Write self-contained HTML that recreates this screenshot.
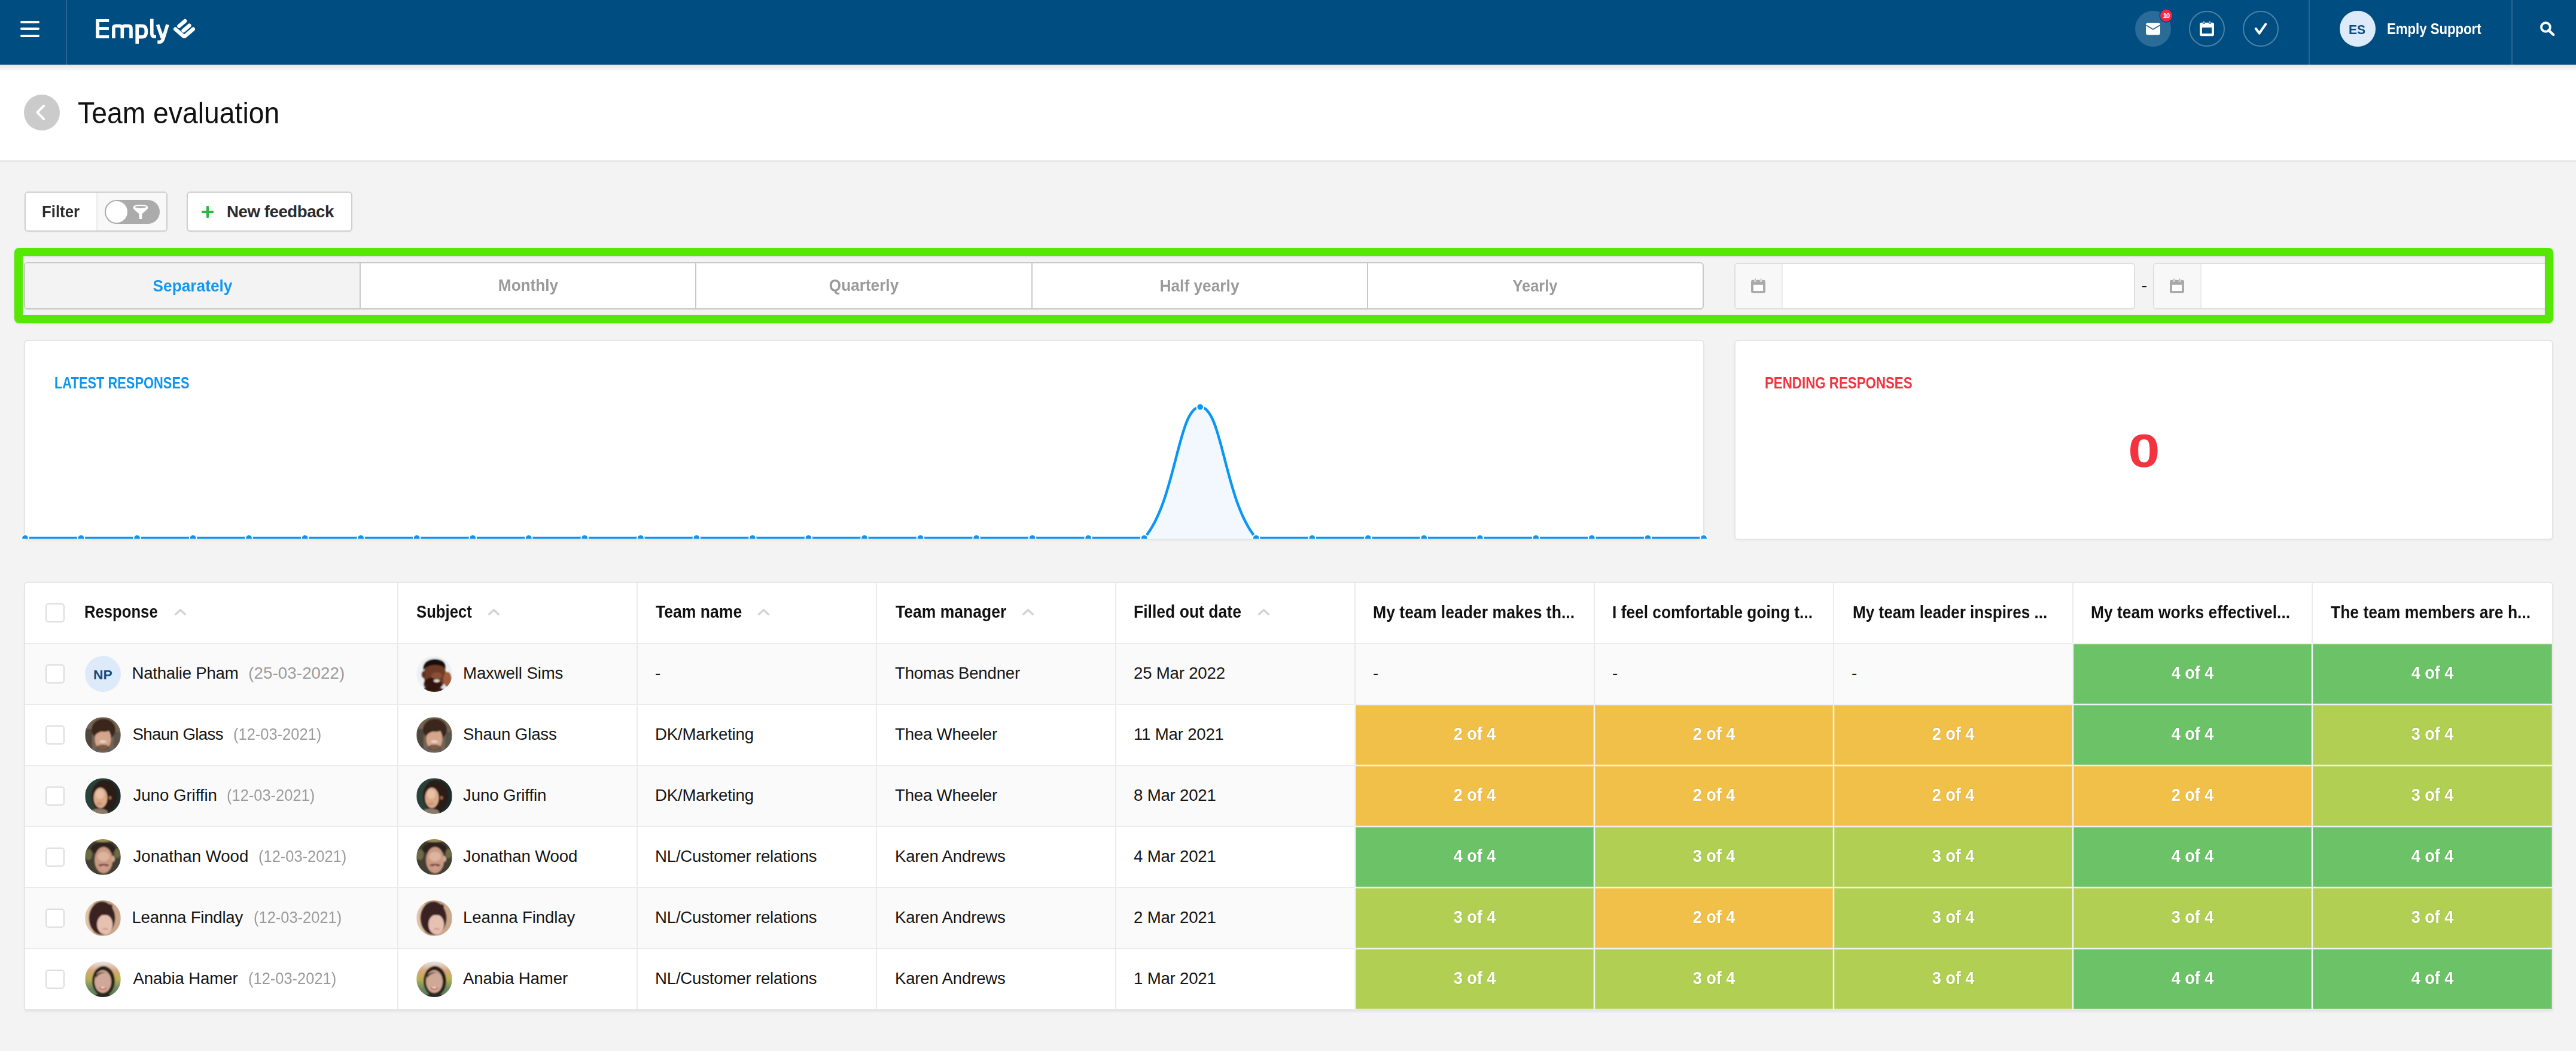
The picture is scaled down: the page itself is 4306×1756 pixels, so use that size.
<!DOCTYPE html>
<html><head><meta charset="utf-8"><title>Team evaluation</title>
<style>
html,body{margin:0;padding:0;}
body{width:4306px;height:1756px;overflow:hidden;position:relative;background:#f3f3f3;font-family:"Liberation Sans", sans-serif;}
.t{position:absolute;white-space:nowrap;font-family:"Liberation Sans", sans-serif;}
.b{position:absolute;}
svg.b{overflow:hidden;}
</style></head><body>
<div class="b" style="left:0px;top:0px;width:4306px;height:108px;background:#004d82;"></div><div class="b" style="left:0px;top:108px;width:4306px;height:14px;background:linear-gradient(rgba(0,0,0,0.09),rgba(0,0,0,0));"></div><div class="b" style="left:34px;top:34.5px;width:32px;height:4px;background:#fff;border-radius:2px;"></div><div class="b" style="left:34px;top:46px;width:32px;height:4px;background:#fff;border-radius:2px;"></div><div class="b" style="left:34px;top:57.5px;width:32px;height:4px;background:#fff;border-radius:2px;"></div><div class="b" style="left:110px;top:0px;width:2px;height:108px;background:#2f6594;"></div><div class="b" style="left:3859px;top:0px;width:2px;height:108px;background:#2f6594;"></div><div class="b" style="left:4198px;top:0px;width:2px;height:108px;background:#2f6594;"></div><svg class="b" style="left:0;top:0" width="340" height="108" viewBox="0 0 340 108">
<g fill="#fff">
<path d="M160.3,32H182.2V37.1H166.1V45H181.9V50.1H166.1V58.9H182.2V64H160.3Z"/>
</g>
<g fill="none" stroke="#fff" stroke-width="5.6" stroke-linejoin="miter">
<path d="M189.9,64V47Q189.9,43.3 193.5,43.3H199.5Q204.3,43.3 204.3,48V64M204.3,48Q204.3,43.3 209,43.3H214.5Q219,43.3 219,48V64"/>
<path d="M229.2,72.9V43.3H237.5Q244.4,43.3 244.4,52.8Q244.4,61.8 237.5,61.8H229.2"/>
<path d="M253.8,31.5V56Q253.8,61.2 258.5,61.2H261"/>
<path d="M263.5,41.2L271.3,63.5M280.1,41.2L272.5,65.5Q270.8,70.2 266.5,70.2H263.3"/>
</g>
<g fill="none" stroke="#fff" stroke-width="6.4" stroke-linecap="round" stroke-linejoin="round">
<path d="M293.2,48.7L306.3,60.1Q307.9,61.4 309.5,60.1L322.8,48.7"/>
<path d="M299.4,43.7L309.3,35.1"/>
<path d="M306.5,51.2L316.4,42.7"/>
</g>
</svg><div class="b" style="left:3569px;top:18px;width:60px;height:60px;background:rgba(255,255,255,0.17);border-radius:50%;"></div><svg class="b" style="left:3580px;top:30px" width="40" height="36" viewBox="3580 30 40 36">
<rect x="3587" y="38" width="24" height="20.2" rx="3.5" fill="#fff"/>
<path d="M3587.5,42.2L3599,49L3610.5,42.2" fill="none" stroke="#2a628f" stroke-width="1.8"/>
</svg><div class="b" style="left:3611px;top:15.8px;width:20px;height:20px;background:#ee2c3c;border-radius:50%;box-shadow:0 0 0 1.6px #004d82;"></div><div class="t" style="left:3615.8px;top:21.2px;font-size:11.00px;line-height:11.00px;font-weight:700;color:#fff;letter-spacing:-0.900px;">10</div><div class="b" style="left:3659px;top:18px;width:60px;height:60px;border:2px solid rgba(255,255,255,0.3);border-radius:50%;box-sizing:border-box;"></div><svg class="b" style="left:3670px;top:30px" width="40" height="36" viewBox="3670 30 40 36">
<rect x="3677" y="37.8" width="24" height="22.4" rx="3" fill="#fff"/>
<rect x="3681" y="46" width="16" height="10" fill="#004d82"/>
<path d="M3684,35.5V40M3694,35.5V40" stroke="#004d82" stroke-width="3.4"/>
<path d="M3684,35.6V39.5M3694,35.6V39.5" stroke="#fff" stroke-width="1.4"/>
</svg><div class="b" style="left:3749px;top:18px;width:60px;height:60px;border:2px solid rgba(255,255,255,0.3);border-radius:50%;box-sizing:border-box;"></div><svg class="b" style="left:3760px;top:30px" width="40" height="36" viewBox="3760 30 40 36">
<path d="M3770.8,47.8L3776.6,55.6L3787.3,40.3" fill="none" stroke="#fff" stroke-width="4" stroke-linecap="round" stroke-linejoin="round"/>
</svg><div class="b" style="left:3911px;top:18px;width:60px;height:60px;background:#dceafa;border-radius:50%;"></div><div class="t" style="left:3926.1px;top:38.2px;font-size:22.82px;line-height:22.82px;font-weight:700;color:#0f4a7c;transform:scaleX(0.9243);transform-origin:0 0;">ES</div><div class="t" style="left:3990.2px;top:35.2px;font-size:26.16px;line-height:26.16px;font-weight:700;color:#fff;transform:scaleX(0.8473);transform-origin:0 0;">Emply Support</div><svg class="b" style="left:4240px;top:30px" width="40" height="36" viewBox="4240 30 40 36">
<circle cx="4255.4" cy="45.4" r="7.4" fill="none" stroke="#fff" stroke-width="3.9"/>
<path d="M4260.3,50.6L4268.2,58" stroke="#fff" stroke-width="4.4" stroke-linecap="round"/>
</svg><div class="b" style="left:0px;top:108px;width:4306px;height:160px;background:#fff;"></div><div class="b" style="left:0px;top:108px;width:4306px;height:12px;background:linear-gradient(rgba(0,0,0,0.1),rgba(0,0,0,0));"></div><div class="b" style="left:0px;top:268px;width:4306px;height:2px;background:#e2e2e2;"></div><div class="b" style="left:40px;top:158px;width:60px;height:60px;background:#cbcbcb;border-radius:50%;"></div><svg class="b" style="left:40px;top:158px" width="60" height="60" viewBox="40 158 60 60">
<path d="M73.2,176.8L62.3,187.7L73.2,198.8" fill="none" stroke="#fff" stroke-width="4" stroke-linecap="round" stroke-linejoin="round"/>
</svg><div class="t" style="left:130.1px;top:163.7px;font-size:49.42px;line-height:49.42px;font-weight:400;color:#111;transform:scaleX(0.9374);transform-origin:0 0;">Team evaluation</div><div class="b" style="left:41px;top:320px;width:239px;height:67px;background:#fff;border:2px solid #cfcfcf;border-radius:6px;box-sizing:border-box;box-shadow:0 1px 2px rgba(0,0,0,0.06);"></div><div class="b" style="left:161px;top:322px;width:117px;height:63px;background:#f8f8f8;border-left:2px solid #ebebeb;border-radius:0 4px 4px 0;box-sizing:border-box;"></div><div class="t" style="left:69.7px;top:339.9px;font-size:27.62px;line-height:27.62px;font-weight:700;color:#2b2b2b;transform:scaleX(0.9347);transform-origin:0 0;">Filter</div><div class="b" style="left:175px;top:334px;width:92px;height:40px;background:#ababab;border-radius:20px;"></div><div class="b" style="left:176.6px;top:335.6px;width:36.6px;height:36.6px;background:#fff;border-radius:50%;"></div><svg class="b" style="left:215px;top:334px" width="40" height="40" viewBox="215 334 40 40">
<path d="M223,345.5Q223,342 235,342Q247,342 247,345.5V348.8L237.3,357.5V365Q237.3,366 236.3,366H233.6Q232.6,366 232.6,365V357.5L223,348.8Z" fill="#fff"/>
<ellipse cx="235.1" cy="345.8" rx="9.4" ry="1.8" fill="#ababab"/>
</svg><div class="b" style="left:312px;top:320px;width:277px;height:67px;background:#fff;border:2px solid #cfcfcf;border-radius:6px;box-sizing:border-box;box-shadow:0 1px 2px rgba(0,0,0,0.06);"></div><div class="b" style="left:337px;top:352px;width:20px;height:4px;background:#2cb743;border-radius:1px;"></div><div class="b" style="left:345px;top:344px;width:4px;height:20px;background:#2cb743;border-radius:1px;"></div><div class="t" style="left:379.0px;top:339.9px;font-size:27.62px;line-height:27.62px;font-weight:700;color:#2b2b2b;letter-spacing:-0.435px;">New feedback</div><div class="b" style="left:40px;top:438px;width:2808px;height:79px;background:#fff;border:2px solid #c9c9c9;border-radius:6px;box-sizing:border-box;box-shadow:0 1px 2px rgba(0,0,0,0.05);"></div><div class="b" style="left:42px;top:440px;width:559px;height:75px;background:#f3f3f3;border-radius:4px 0 0 4px;"></div><div class="b" style="left:601px;top:440px;width:2px;height:75px;background:#c9c9c9;"></div><div class="b" style="left:1162px;top:440px;width:2px;height:75px;background:#c9c9c9;"></div><div class="b" style="left:1724px;top:440px;width:2px;height:75px;background:#c9c9c9;"></div><div class="b" style="left:2285px;top:440px;width:2px;height:75px;background:#c9c9c9;"></div><div class="t" style="left:-78.5px;width:800px;text-align:center;top:462.8px;font-size:28.34px;line-height:28.34px;font-weight:700;color:#1497ef;transform:scaleX(0.9265);transform-origin:50% 0;">Separately</div><div class="t" style="left:482.5px;width:800px;text-align:center;top:463.4px;font-size:27.62px;line-height:27.62px;font-weight:700;color:#9a9a9a;transform:scaleX(0.9482);transform-origin:50% 0;">Monthly</div><div class="t" style="left:1043.5px;width:800px;text-align:center;top:463.4px;font-size:27.62px;line-height:27.62px;font-weight:700;color:#9a9a9a;transform:scaleX(0.9482);transform-origin:50% 0;">Quarterly</div><div class="t" style="left:1604.5px;width:800px;text-align:center;top:462.8px;font-size:28.34px;line-height:28.34px;font-weight:700;color:#9a9a9a;transform:scaleX(0.9288);transform-origin:50% 0;">Half yearly</div><div class="t" style="left:2166.0px;width:800px;text-align:center;top:462.8px;font-size:28.34px;line-height:28.34px;font-weight:700;color:#9a9a9a;transform:scaleX(0.8968);transform-origin:50% 0;">Yearly</div><div class="b" style="left:2899px;top:439px;width:670px;height:78px;background:#fff;border:2px solid #dfdfdf;border-radius:6px;box-sizing:border-box;"></div><div class="b" style="left:2901px;top:441px;width:77px;height:74px;background:#f8f8f8;border-right:2px solid #ebebeb;border-radius:4px 0 0 4px;"></div><svg class="b" style="left:2923px;top:460px" width="32" height="36" viewBox="2923 460 32 36">
<rect x="2927" y="467.8" width="24" height="22" rx="3.2" fill="#a9a9a9"/>
<rect x="2931" y="475.8" width="16" height="10.2" fill="#fff"/>
<path d="M2934,465V470.5M2943.6,465V470.5" stroke="#f8f8f8" stroke-width="3.6"/>
<path d="M2934,465.6V469.6M2943.6,465.6V469.6" stroke="#a9a9a9" stroke-width="1.5"/>
</svg><div class="b" style="left:3599px;top:439px;width:667px;height:78px;background:#fff;border:2px solid #dfdfdf;border-radius:6px;box-sizing:border-box;"></div><div class="b" style="left:3601px;top:441px;width:77px;height:74px;background:#f8f8f8;border-right:2px solid #ebebeb;border-radius:4px 0 0 4px;"></div><svg class="b" style="left:3623px;top:460px" width="32" height="36" viewBox="3623 460 32 36">
<rect x="3627" y="467.8" width="24" height="22" rx="3.2" fill="#a9a9a9"/>
<rect x="3631" y="475.8" width="16" height="10.2" fill="#fff"/>
<path d="M3634,465V470.5M3643.6,465V470.5" stroke="#f8f8f8" stroke-width="3.6"/>
<path d="M3634,465.6V469.6M3643.6,465.6V469.6" stroke="#a9a9a9" stroke-width="1.5"/>
</svg><div class="b" style="left:3581px;top:477.8px;width:7px;height:2.5px;background:#111;"></div><div class="b" style="left:24px;top:414px;width:4244px;height:126px;border:14px solid #54e802;border-radius:8px;box-sizing:border-box;box-shadow:0 1px 3px rgba(0,0,0,0.15), inset 0 1px 3px rgba(0,0,0,0.12);"></div><div class="b" style="left:42px;top:570px;width:2805px;height:330px;background:#fff;border-radius:4px;box-shadow:0 0 0 2px #e5e5e5, 0 2px 5px rgba(0,0,0,0.08);"></div><div class="b" style="left:2901px;top:570px;width:1365px;height:330px;background:#fff;border-radius:4px;box-shadow:0 0 0 2px #e5e5e5, 0 2px 5px rgba(0,0,0,0.08);"></div><div class="t" style="left:91.2px;top:626.8px;font-size:26.89px;line-height:26.89px;font-weight:700;color:#0f95ef;transform:scaleX(0.8136);transform-origin:0 0;">LATEST RESPONSES</div><div class="t" style="left:2950.2px;top:626.8px;font-size:26.89px;line-height:26.89px;font-weight:700;color:#f3333f;transform:scaleX(0.8298);transform-origin:0 0;">PENDING RESPONSES</div><div class="t" style="left:3183.5px;width:800px;text-align:center;top:714.2px;font-size:78.60px;line-height:78.60px;font-weight:700;color:#f3333f;transform:scaleX(1.2200);transform-origin:50% 0;">0</div><svg class="b" style="left:20px;top:640px" width="2850" height="260" viewBox="20 640 2850 260">
<path d="M42.0,899.0 C79.4,899.0 98.1,899.0 135.5,899.0 C172.9,899.0 191.7,899.0 229.1,899.0 C266.5,899.0 285.2,899.0 322.6,899.0 C360.0,899.0 378.7,899.0 416.1,899.0 C453.5,899.0 472.3,899.0 509.7,899.0 C547.1,899.0 565.8,899.0 603.2,899.0 C640.6,899.0 659.3,899.0 696.7,899.0 C734.1,899.0 752.9,899.0 790.3,899.0 C827.7,899.0 846.4,899.0 883.8,899.0 C921.2,899.0 939.9,899.0 977.3,899.0 C1014.7,899.0 1033.5,899.0 1070.9,899.0 C1108.3,899.0 1127.0,899.0 1164.4,899.0 C1201.8,899.0 1220.5,899.0 1257.9,899.0 C1295.3,899.0 1314.1,899.0 1351.5,899.0 C1388.9,899.0 1407.6,899.0 1445.0,899.0 C1482.4,899.0 1501.1,899.0 1538.5,899.0 C1575.9,899.0 1594.7,899.0 1632.1,899.0 C1669.5,899.0 1688.2,899.0 1725.6,899.0 C1763.0,899.0 1781.7,899.0 1819.1,899.0 C1856.5,899.0 1891.6,899.0 1912.7,899.0 C1966.4,836.1 1968.8,680.0 2006.2,680.0 C2043.6,680.0 2046.0,836.1 2099.7,899.0 C2120.8,899.0 2155.9,899.0 2193.3,899.0 C2230.7,899.0 2249.4,899.0 2286.8,899.0 C2324.2,899.0 2342.9,899.0 2380.3,899.0 C2417.7,899.0 2436.5,899.0 2473.9,899.0 C2511.3,899.0 2530.0,899.0 2567.4,899.0 C2604.8,899.0 2623.5,899.0 2660.9,899.0 C2698.3,899.0 2717.1,899.0 2754.5,899.0 C2791.9,899.0 2810.6,899.0 2848.0,899.0 L2848,905 L42,905Z" fill="#f2f8fe"/>
<path d="M42.0,899.0 C79.4,899.0 98.1,899.0 135.5,899.0 C172.9,899.0 191.7,899.0 229.1,899.0 C266.5,899.0 285.2,899.0 322.6,899.0 C360.0,899.0 378.7,899.0 416.1,899.0 C453.5,899.0 472.3,899.0 509.7,899.0 C547.1,899.0 565.8,899.0 603.2,899.0 C640.6,899.0 659.3,899.0 696.7,899.0 C734.1,899.0 752.9,899.0 790.3,899.0 C827.7,899.0 846.4,899.0 883.8,899.0 C921.2,899.0 939.9,899.0 977.3,899.0 C1014.7,899.0 1033.5,899.0 1070.9,899.0 C1108.3,899.0 1127.0,899.0 1164.4,899.0 C1201.8,899.0 1220.5,899.0 1257.9,899.0 C1295.3,899.0 1314.1,899.0 1351.5,899.0 C1388.9,899.0 1407.6,899.0 1445.0,899.0 C1482.4,899.0 1501.1,899.0 1538.5,899.0 C1575.9,899.0 1594.7,899.0 1632.1,899.0 C1669.5,899.0 1688.2,899.0 1725.6,899.0 C1763.0,899.0 1781.7,899.0 1819.1,899.0 C1856.5,899.0 1891.6,899.0 1912.7,899.0 C1966.4,836.1 1968.8,680.0 2006.2,680.0 C2043.6,680.0 2046.0,836.1 2099.7,899.0 C2120.8,899.0 2155.9,899.0 2193.3,899.0 C2230.7,899.0 2249.4,899.0 2286.8,899.0 C2324.2,899.0 2342.9,899.0 2380.3,899.0 C2417.7,899.0 2436.5,899.0 2473.9,899.0 C2511.3,899.0 2530.0,899.0 2567.4,899.0 C2604.8,899.0 2623.5,899.0 2660.9,899.0 C2698.3,899.0 2717.1,899.0 2754.5,899.0 C2791.9,899.0 2810.6,899.0 2848.0,899.0" fill="none" stroke="#0a96f5" stroke-width="4.4"/>
<circle cx="42.0" cy="899" r="5.8" fill="#0a96f5" stroke="#fff" stroke-width="2"/><circle cx="135.5" cy="899" r="5.8" fill="#0a96f5" stroke="#fff" stroke-width="2"/><circle cx="229.1" cy="899" r="5.8" fill="#0a96f5" stroke="#fff" stroke-width="2"/><circle cx="322.6" cy="899" r="5.8" fill="#0a96f5" stroke="#fff" stroke-width="2"/><circle cx="416.1" cy="899" r="5.8" fill="#0a96f5" stroke="#fff" stroke-width="2"/><circle cx="509.7" cy="899" r="5.8" fill="#0a96f5" stroke="#fff" stroke-width="2"/><circle cx="603.2" cy="899" r="5.8" fill="#0a96f5" stroke="#fff" stroke-width="2"/><circle cx="696.7" cy="899" r="5.8" fill="#0a96f5" stroke="#fff" stroke-width="2"/><circle cx="790.3" cy="899" r="5.8" fill="#0a96f5" stroke="#fff" stroke-width="2"/><circle cx="883.8" cy="899" r="5.8" fill="#0a96f5" stroke="#fff" stroke-width="2"/><circle cx="977.3" cy="899" r="5.8" fill="#0a96f5" stroke="#fff" stroke-width="2"/><circle cx="1070.9" cy="899" r="5.8" fill="#0a96f5" stroke="#fff" stroke-width="2"/><circle cx="1164.4" cy="899" r="5.8" fill="#0a96f5" stroke="#fff" stroke-width="2"/><circle cx="1257.9" cy="899" r="5.8" fill="#0a96f5" stroke="#fff" stroke-width="2"/><circle cx="1351.5" cy="899" r="5.8" fill="#0a96f5" stroke="#fff" stroke-width="2"/><circle cx="1445.0" cy="899" r="5.8" fill="#0a96f5" stroke="#fff" stroke-width="2"/><circle cx="1538.5" cy="899" r="5.8" fill="#0a96f5" stroke="#fff" stroke-width="2"/><circle cx="1632.1" cy="899" r="5.8" fill="#0a96f5" stroke="#fff" stroke-width="2"/><circle cx="1725.6" cy="899" r="5.8" fill="#0a96f5" stroke="#fff" stroke-width="2"/><circle cx="1819.1" cy="899" r="5.8" fill="#0a96f5" stroke="#fff" stroke-width="2"/><circle cx="1912.7" cy="899" r="5.8" fill="#0a96f5" stroke="#fff" stroke-width="2"/><circle cx="2006.2" cy="680" r="5.8" fill="#0a96f5" stroke="#fff" stroke-width="2"/><circle cx="2099.7" cy="899" r="5.8" fill="#0a96f5" stroke="#fff" stroke-width="2"/><circle cx="2193.3" cy="899" r="5.8" fill="#0a96f5" stroke="#fff" stroke-width="2"/><circle cx="2286.8" cy="899" r="5.8" fill="#0a96f5" stroke="#fff" stroke-width="2"/><circle cx="2380.3" cy="899" r="5.8" fill="#0a96f5" stroke="#fff" stroke-width="2"/><circle cx="2473.9" cy="899" r="5.8" fill="#0a96f5" stroke="#fff" stroke-width="2"/><circle cx="2567.4" cy="899" r="5.8" fill="#0a96f5" stroke="#fff" stroke-width="2"/><circle cx="2660.9" cy="899" r="5.8" fill="#0a96f5" stroke="#fff" stroke-width="2"/><circle cx="2754.5" cy="899" r="5.8" fill="#0a96f5" stroke="#fff" stroke-width="2"/><circle cx="2848.0" cy="899" r="5.8" fill="#0a96f5" stroke="#fff" stroke-width="2"/>
</svg><div class="b" style="left:42px;top:974px;width:4224px;height:712px;background:#fff;border-radius:4px 4px 0 0;box-shadow:0 0 0 2px #e6e6e6, 0 4px 4px rgba(0,0,0,0.08);"></div><div class="b" style="left:42px;top:1076px;width:4224px;height:100px;background:#fafafa;"></div><div class="b" style="left:42px;top:1280px;width:4224px;height:100px;background:#fafafa;"></div><div class="b" style="left:42px;top:1484px;width:4224px;height:100px;background:#fafafa;"></div><div class="b" style="left:3466px;top:1076px;width:398px;height:100px;background:#6cc267;box-shadow:inset 0 0 0 1px rgba(255,255,255,0.25);"></div><div class="b" style="left:3866px;top:1076px;width:400px;height:100px;background:#6cc267;box-shadow:inset 0 0 0 1px rgba(255,255,255,0.25);"></div><div class="b" style="left:2266px;top:1178px;width:398px;height:100px;background:#f1c049;box-shadow:inset 0 0 0 1px rgba(255,255,255,0.25);"></div><div class="b" style="left:2666px;top:1178px;width:398px;height:100px;background:#f1c049;box-shadow:inset 0 0 0 1px rgba(255,255,255,0.25);"></div><div class="b" style="left:3066px;top:1178px;width:398px;height:100px;background:#f1c049;box-shadow:inset 0 0 0 1px rgba(255,255,255,0.25);"></div><div class="b" style="left:3466px;top:1178px;width:398px;height:100px;background:#6cc267;box-shadow:inset 0 0 0 1px rgba(255,255,255,0.25);"></div><div class="b" style="left:3866px;top:1178px;width:400px;height:100px;background:#b0cf53;box-shadow:inset 0 0 0 1px rgba(255,255,255,0.25);"></div><div class="b" style="left:2266px;top:1280px;width:398px;height:100px;background:#f1c049;box-shadow:inset 0 0 0 1px rgba(255,255,255,0.25);"></div><div class="b" style="left:2666px;top:1280px;width:398px;height:100px;background:#f1c049;box-shadow:inset 0 0 0 1px rgba(255,255,255,0.25);"></div><div class="b" style="left:3066px;top:1280px;width:398px;height:100px;background:#f1c049;box-shadow:inset 0 0 0 1px rgba(255,255,255,0.25);"></div><div class="b" style="left:3466px;top:1280px;width:398px;height:100px;background:#f1c049;box-shadow:inset 0 0 0 1px rgba(255,255,255,0.25);"></div><div class="b" style="left:3866px;top:1280px;width:400px;height:100px;background:#b0cf53;box-shadow:inset 0 0 0 1px rgba(255,255,255,0.25);"></div><div class="b" style="left:2266px;top:1382px;width:398px;height:100px;background:#6cc267;box-shadow:inset 0 0 0 1px rgba(255,255,255,0.25);"></div><div class="b" style="left:2666px;top:1382px;width:398px;height:100px;background:#b0cf53;box-shadow:inset 0 0 0 1px rgba(255,255,255,0.25);"></div><div class="b" style="left:3066px;top:1382px;width:398px;height:100px;background:#b0cf53;box-shadow:inset 0 0 0 1px rgba(255,255,255,0.25);"></div><div class="b" style="left:3466px;top:1382px;width:398px;height:100px;background:#6cc267;box-shadow:inset 0 0 0 1px rgba(255,255,255,0.25);"></div><div class="b" style="left:3866px;top:1382px;width:400px;height:100px;background:#6cc267;box-shadow:inset 0 0 0 1px rgba(255,255,255,0.25);"></div><div class="b" style="left:2266px;top:1484px;width:398px;height:100px;background:#b0cf53;box-shadow:inset 0 0 0 1px rgba(255,255,255,0.25);"></div><div class="b" style="left:2666px;top:1484px;width:398px;height:100px;background:#f1c049;box-shadow:inset 0 0 0 1px rgba(255,255,255,0.25);"></div><div class="b" style="left:3066px;top:1484px;width:398px;height:100px;background:#b0cf53;box-shadow:inset 0 0 0 1px rgba(255,255,255,0.25);"></div><div class="b" style="left:3466px;top:1484px;width:398px;height:100px;background:#b0cf53;box-shadow:inset 0 0 0 1px rgba(255,255,255,0.25);"></div><div class="b" style="left:3866px;top:1484px;width:400px;height:100px;background:#b0cf53;box-shadow:inset 0 0 0 1px rgba(255,255,255,0.25);"></div><div class="b" style="left:2266px;top:1586px;width:398px;height:100px;background:#b0cf53;box-shadow:inset 0 0 0 1px rgba(255,255,255,0.25);"></div><div class="b" style="left:2666px;top:1586px;width:398px;height:100px;background:#b0cf53;box-shadow:inset 0 0 0 1px rgba(255,255,255,0.25);"></div><div class="b" style="left:3066px;top:1586px;width:398px;height:100px;background:#b0cf53;box-shadow:inset 0 0 0 1px rgba(255,255,255,0.25);"></div><div class="b" style="left:3466px;top:1586px;width:398px;height:100px;background:#6cc267;box-shadow:inset 0 0 0 1px rgba(255,255,255,0.25);"></div><div class="b" style="left:3866px;top:1586px;width:400px;height:100px;background:#6cc267;box-shadow:inset 0 0 0 1px rgba(255,255,255,0.25);"></div><div class="b" style="left:42px;top:1074px;width:4224px;height:2px;background:#ebebeb;"></div><div class="b" style="left:42px;top:1176px;width:4224px;height:2px;background:#ebebeb;"></div><div class="b" style="left:42px;top:1278px;width:4224px;height:2px;background:#ebebeb;"></div><div class="b" style="left:42px;top:1380px;width:4224px;height:2px;background:#ebebeb;"></div><div class="b" style="left:42px;top:1482px;width:4224px;height:2px;background:#ebebeb;"></div><div class="b" style="left:42px;top:1584px;width:4224px;height:2px;background:#ebebeb;"></div><div class="b" style="left:664px;top:974px;width:2px;height:712px;background:#ebebeb;"></div><div class="b" style="left:1064px;top:974px;width:2px;height:712px;background:#ebebeb;"></div><div class="b" style="left:1464px;top:974px;width:2px;height:712px;background:#ebebeb;"></div><div class="b" style="left:1864px;top:974px;width:2px;height:712px;background:#ebebeb;"></div><div class="b" style="left:2264px;top:974px;width:2px;height:712px;background:#ebebeb;"></div><div class="b" style="left:2664px;top:974px;width:2px;height:712px;background:#ebebeb;"></div><div class="b" style="left:3064px;top:974px;width:2px;height:712px;background:#ebebeb;"></div><div class="b" style="left:3464px;top:974px;width:2px;height:712px;background:#ebebeb;"></div><div class="b" style="left:3864px;top:974px;width:2px;height:712px;background:#ebebeb;"></div><div class="b" style="left:3464px;top:1074px;width:402px;height:2px;background:#eef1f7;"></div><div class="b" style="left:3464px;top:1074px;width:2px;height:104px;background:#eef1f7;"></div><div class="b" style="left:3864px;top:1074px;width:404px;height:2px;background:#eef1f7;"></div><div class="b" style="left:3864px;top:1074px;width:2px;height:104px;background:#eef1f7;"></div><div class="b" style="left:2264px;top:1176px;width:402px;height:2px;background:#eef1f7;"></div><div class="b" style="left:2264px;top:1176px;width:2px;height:104px;background:#eef1f7;"></div><div class="b" style="left:2664px;top:1176px;width:402px;height:2px;background:#eef1f7;"></div><div class="b" style="left:2664px;top:1176px;width:2px;height:104px;background:#eef1f7;"></div><div class="b" style="left:3064px;top:1176px;width:402px;height:2px;background:#eef1f7;"></div><div class="b" style="left:3064px;top:1176px;width:2px;height:104px;background:#eef1f7;"></div><div class="b" style="left:3464px;top:1176px;width:402px;height:2px;background:#eef1f7;"></div><div class="b" style="left:3464px;top:1176px;width:2px;height:104px;background:#eef1f7;"></div><div class="b" style="left:3864px;top:1176px;width:404px;height:2px;background:#eef1f7;"></div><div class="b" style="left:3864px;top:1176px;width:2px;height:104px;background:#eef1f7;"></div><div class="b" style="left:2264px;top:1278px;width:402px;height:2px;background:#eef1f7;"></div><div class="b" style="left:2264px;top:1278px;width:2px;height:104px;background:#eef1f7;"></div><div class="b" style="left:2664px;top:1278px;width:402px;height:2px;background:#eef1f7;"></div><div class="b" style="left:2664px;top:1278px;width:2px;height:104px;background:#eef1f7;"></div><div class="b" style="left:3064px;top:1278px;width:402px;height:2px;background:#eef1f7;"></div><div class="b" style="left:3064px;top:1278px;width:2px;height:104px;background:#eef1f7;"></div><div class="b" style="left:3464px;top:1278px;width:402px;height:2px;background:#eef1f7;"></div><div class="b" style="left:3464px;top:1278px;width:2px;height:104px;background:#eef1f7;"></div><div class="b" style="left:3864px;top:1278px;width:404px;height:2px;background:#eef1f7;"></div><div class="b" style="left:3864px;top:1278px;width:2px;height:104px;background:#eef1f7;"></div><div class="b" style="left:2264px;top:1380px;width:402px;height:2px;background:#eef1f7;"></div><div class="b" style="left:2264px;top:1380px;width:2px;height:104px;background:#eef1f7;"></div><div class="b" style="left:2664px;top:1380px;width:402px;height:2px;background:#eef1f7;"></div><div class="b" style="left:2664px;top:1380px;width:2px;height:104px;background:#eef1f7;"></div><div class="b" style="left:3064px;top:1380px;width:402px;height:2px;background:#eef1f7;"></div><div class="b" style="left:3064px;top:1380px;width:2px;height:104px;background:#eef1f7;"></div><div class="b" style="left:3464px;top:1380px;width:402px;height:2px;background:#eef1f7;"></div><div class="b" style="left:3464px;top:1380px;width:2px;height:104px;background:#eef1f7;"></div><div class="b" style="left:3864px;top:1380px;width:404px;height:2px;background:#eef1f7;"></div><div class="b" style="left:3864px;top:1380px;width:2px;height:104px;background:#eef1f7;"></div><div class="b" style="left:2264px;top:1482px;width:402px;height:2px;background:#eef1f7;"></div><div class="b" style="left:2264px;top:1482px;width:2px;height:104px;background:#eef1f7;"></div><div class="b" style="left:2664px;top:1482px;width:402px;height:2px;background:#eef1f7;"></div><div class="b" style="left:2664px;top:1482px;width:2px;height:104px;background:#eef1f7;"></div><div class="b" style="left:3064px;top:1482px;width:402px;height:2px;background:#eef1f7;"></div><div class="b" style="left:3064px;top:1482px;width:2px;height:104px;background:#eef1f7;"></div><div class="b" style="left:3464px;top:1482px;width:402px;height:2px;background:#eef1f7;"></div><div class="b" style="left:3464px;top:1482px;width:2px;height:104px;background:#eef1f7;"></div><div class="b" style="left:3864px;top:1482px;width:404px;height:2px;background:#eef1f7;"></div><div class="b" style="left:3864px;top:1482px;width:2px;height:104px;background:#eef1f7;"></div><div class="b" style="left:2264px;top:1584px;width:402px;height:2px;background:#eef1f7;"></div><div class="b" style="left:2264px;top:1584px;width:2px;height:104px;background:#eef1f7;"></div><div class="b" style="left:2664px;top:1584px;width:402px;height:2px;background:#eef1f7;"></div><div class="b" style="left:2664px;top:1584px;width:2px;height:104px;background:#eef1f7;"></div><div class="b" style="left:3064px;top:1584px;width:402px;height:2px;background:#eef1f7;"></div><div class="b" style="left:3064px;top:1584px;width:2px;height:104px;background:#eef1f7;"></div><div class="b" style="left:3464px;top:1584px;width:402px;height:2px;background:#eef1f7;"></div><div class="b" style="left:3464px;top:1584px;width:2px;height:104px;background:#eef1f7;"></div><div class="b" style="left:3864px;top:1584px;width:404px;height:2px;background:#eef1f7;"></div><div class="b" style="left:3864px;top:1584px;width:2px;height:104px;background:#eef1f7;"></div><div class="t" style="left:141.1px;top:1008.3px;font-size:29.22px;line-height:29.22px;font-weight:700;color:#111;transform:scaleX(0.8783);transform-origin:0 0;">Response</div><svg class="b" style="left:289.6px;top:1012px" width="24" height="20" viewBox="0 0 24 20"><path d="M3.5,14.5L11.5,7L19.5,14.5" fill="none" stroke="#d2d2d2" stroke-width="3.2" stroke-linecap="round" stroke-linejoin="round"/></svg><div class="t" style="left:696.0px;top:1008.3px;font-size:29.22px;line-height:29.22px;font-weight:700;color:#111;transform:scaleX(0.8794);transform-origin:0 0;">Subject</div><svg class="b" style="left:814.0px;top:1012px" width="24" height="20" viewBox="0 0 24 20"><path d="M3.5,14.5L11.5,7L19.5,14.5" fill="none" stroke="#d2d2d2" stroke-width="3.2" stroke-linecap="round" stroke-linejoin="round"/></svg><div class="t" style="left:1096.0px;top:1008.3px;font-size:29.22px;line-height:29.22px;font-weight:700;color:#111;transform:scaleX(0.9091);transform-origin:0 0;">Team name</div><svg class="b" style="left:1264.7px;top:1012px" width="24" height="20" viewBox="0 0 24 20"><path d="M3.5,14.5L11.5,7L19.5,14.5" fill="none" stroke="#d2d2d2" stroke-width="3.2" stroke-linecap="round" stroke-linejoin="round"/></svg><div class="t" style="left:1497.0px;top:1008.3px;font-size:29.22px;line-height:29.22px;font-weight:700;color:#111;transform:scaleX(0.9077);transform-origin:0 0;">Team manager</div><svg class="b" style="left:1706.6px;top:1012px" width="24" height="20" viewBox="0 0 24 20"><path d="M3.5,14.5L11.5,7L19.5,14.5" fill="none" stroke="#d2d2d2" stroke-width="3.2" stroke-linecap="round" stroke-linejoin="round"/></svg><div class="t" style="left:1895.1px;top:1008.3px;font-size:29.22px;line-height:29.22px;font-weight:700;color:#111;transform:scaleX(0.9085);transform-origin:0 0;">Filled out date</div><svg class="b" style="left:2100.5px;top:1012px" width="24" height="20" viewBox="0 0 24 20"><path d="M3.5,14.5L11.5,7L19.5,14.5" fill="none" stroke="#d2d2d2" stroke-width="3.2" stroke-linecap="round" stroke-linejoin="round"/></svg><div class="t" style="left:2295.1px;top:1008.7px;font-size:29.07px;line-height:29.07px;font-weight:700;color:#111;transform:scaleX(0.9153);transform-origin:0 0;">My team leader makes th...</div><div class="t" style="left:2695.1px;top:1008.7px;font-size:29.07px;line-height:29.07px;font-weight:700;color:#111;transform:scaleX(0.9061);transform-origin:0 0;">I feel comfortable going t...</div><div class="t" style="left:3096.5px;top:1008.7px;font-size:29.07px;line-height:29.07px;font-weight:700;color:#111;transform:scaleX(0.8992);transform-origin:0 0;">My team leader inspires ...</div><div class="t" style="left:3495.1px;top:1008.7px;font-size:29.07px;line-height:29.07px;font-weight:700;color:#111;transform:scaleX(0.9084);transform-origin:0 0;">My team works effectivel...</div><div class="t" style="left:3896.0px;top:1008.7px;font-size:29.07px;line-height:29.07px;font-weight:700;color:#111;transform:scaleX(0.9114);transform-origin:0 0;">The team members are h...</div><div class="b" style="left:76px;top:1008px;width:32px;height:32px;background:#fff;border:2px solid #dcdcdc;border-radius:5px;box-sizing:border-box;"></div><div class="b" style="left:76px;top:1110px;width:32px;height:32px;background:#fff;border:2px solid #dcdcdc;border-radius:5px;box-sizing:border-box;"></div><div class="b" style="left:142px;top:1096px;width:60px;height:60px;background:#dceafa;border-radius:50%;"></div><div class="t" style="left:156.0px;top:1115.6px;font-size:22.82px;line-height:22.82px;font-weight:700;color:#134a7c;letter-spacing:0.037px;">NP</div><div class="t" style="left:220.5px;top:1111.1px;font-size:27.62px;line-height:27.62px;font-weight:400;color:#151515;letter-spacing:-0.241px;">Nathalie Pham</div><div class="t" style="left:415.2px;top:1111.1px;font-size:27.62px;line-height:27.62px;font-weight:400;color:#9b9b9b;letter-spacing:0.134px;">(25-03-2022)</div><svg class="b" style="left:696px;top:1096px" width="60" height="60" viewBox="-30 -30 60 60">
<defs><clipPath id="cmax7261126"><circle r="30"/></clipPath><filter id="fmax7261126" x="-20%" y="-20%" width="140%" height="140%"><feGaussianBlur stdDeviation="1.3"/></filter></defs>
<g clip-path="url(#cmax7261126)"><g filter="url(#fmax7261126)"><rect x="-30" y="-30" width="60" height="60" fill="#eef1f3"/>
<ellipse cx="12" cy="26" rx="10" ry="8" fill="#dfe6ea"/>
<ellipse cx="-2" cy="30" rx="20" ry="9" fill="#3a2016"/>
<ellipse cx="1" cy="2" rx="19" ry="24" fill="#6e3b26"/>
<ellipse cx="-18" cy="1" rx="3.5" ry="6" fill="#5e3422"/>
<path d="M-19,-6Q-20,-24 1,-25Q21,-24 19,-8Q14,-15 1,-15Q-12,-15 -19,-6Z" fill="#141010"/>
<ellipse cx="-3" cy="17" rx="15" ry="11" fill="#2a150d" opacity="0.92"/>
<ellipse cx="4" cy="3" rx="9" ry="6" fill="#8a5036"/>
<ellipse cx="4" cy="11.5" rx="5" ry="2.4" fill="#e3d6cc"/>
<ellipse cx="22" cy="9" rx="7" ry="12.5" fill="#a35c3a"/></g></g></svg><div class="t" style="left:774.0px;top:1111.1px;font-size:27.62px;line-height:27.62px;font-weight:400;color:#151515;letter-spacing:-0.122px;">Maxwell Sims</div><div class="t" style="left:1095.0px;top:1111.1px;font-size:27.62px;line-height:27.62px;font-weight:400;color:#151515;letter-spacing:-0.200px;">-</div><div class="t" style="left:1496.0px;top:1111.1px;font-size:27.62px;line-height:27.62px;font-weight:400;color:#151515;letter-spacing:-0.200px;">Thomas Bendner</div><div class="t" style="left:1895.0px;top:1111.1px;font-size:27.62px;line-height:27.62px;font-weight:400;color:#151515;letter-spacing:-0.200px;">25 Mar 2022</div><div class="t" style="left:2295.0px;top:1111.1px;font-size:27.62px;line-height:27.62px;font-weight:400;color:#151515;letter-spacing:0.000px;">-</div><div class="t" style="left:2695.0px;top:1111.1px;font-size:27.62px;line-height:27.62px;font-weight:400;color:#151515;letter-spacing:0.000px;">-</div><div class="t" style="left:3095.0px;top:1111.1px;font-size:27.62px;line-height:27.62px;font-weight:400;color:#151515;letter-spacing:0.000px;">-</div><div class="t" style="left:3265.0px;width:800px;text-align:center;top:1108.8px;font-size:29.94px;line-height:29.94px;font-weight:700;color:#fff;transform:scaleX(0.9040);transform-origin:50% 0;text-shadow:0 0 2px rgba(0,0,0,0.18);">4 of 4</div><div class="t" style="left:3666.0px;width:800px;text-align:center;top:1108.8px;font-size:29.94px;line-height:29.94px;font-weight:700;color:#fff;transform:scaleX(0.9040);transform-origin:50% 0;text-shadow:0 0 2px rgba(0,0,0,0.18);">4 of 4</div><div class="b" style="left:76px;top:1212px;width:32px;height:32px;background:#fff;border:2px solid #dcdcdc;border-radius:5px;box-sizing:border-box;"></div><svg class="b" style="left:142px;top:1198px" width="60" height="60" viewBox="-30 -30 60 60">
<defs><clipPath id="cshaun1721228"><circle r="30"/></clipPath><filter id="fshaun1721228" x="-20%" y="-20%" width="140%" height="140%"><feGaussianBlur stdDeviation="1.3"/></filter></defs>
<g clip-path="url(#cshaun1721228)"><g filter="url(#fshaun1721228)"><rect x="-30" y="-30" width="60" height="60" fill="#746352"/>
<rect x="-30" y="-10" width="12" height="40" fill="#4e463c"/>
<rect x="18" y="-5" width="12" height="35" fill="#5a544c"/>
<ellipse cx="1" cy="-9" rx="20" ry="18" fill="#3a281c"/>
<ellipse cx="0" cy="6" rx="13.5" ry="19" fill="#d5a68c"/>
<path d="M-16,-6Q-6,-22 14,-10Q8,-4 -2,-6Q-10,-4 -14,2Z" fill="#3a281c"/>
<ellipse cx="0" cy="21" rx="11" ry="5" fill="#5a4334" opacity="0.75"/>
<ellipse cx="0" cy="11" rx="6" ry="2.2" fill="#ead2cc"/>
<ellipse cx="-14" cy="30" rx="6" ry="5" fill="#2d5a8a"/>
<ellipse cx="14" cy="30" rx="6" ry="5" fill="#2d5a8a"/></g></g></svg><div class="t" style="left:221.5px;top:1213.1px;font-size:27.62px;line-height:27.62px;font-weight:400;color:#151515;letter-spacing:-0.598px;">Shaun Glass</div><div class="t" style="left:390.4px;top:1213.1px;font-size:27.62px;line-height:27.62px;font-weight:400;color:#9b9b9b;transform:scaleX(0.9224);transform-origin:0 0;">(12-03-2021)</div><svg class="b" style="left:696px;top:1198px" width="60" height="60" viewBox="-30 -30 60 60">
<defs><clipPath id="cshaun7261228"><circle r="30"/></clipPath><filter id="fshaun7261228" x="-20%" y="-20%" width="140%" height="140%"><feGaussianBlur stdDeviation="1.3"/></filter></defs>
<g clip-path="url(#cshaun7261228)"><g filter="url(#fshaun7261228)"><rect x="-30" y="-30" width="60" height="60" fill="#746352"/>
<rect x="-30" y="-10" width="12" height="40" fill="#4e463c"/>
<rect x="18" y="-5" width="12" height="35" fill="#5a544c"/>
<ellipse cx="1" cy="-9" rx="20" ry="18" fill="#3a281c"/>
<ellipse cx="0" cy="6" rx="13.5" ry="19" fill="#d5a68c"/>
<path d="M-16,-6Q-6,-22 14,-10Q8,-4 -2,-6Q-10,-4 -14,2Z" fill="#3a281c"/>
<ellipse cx="0" cy="21" rx="11" ry="5" fill="#5a4334" opacity="0.75"/>
<ellipse cx="0" cy="11" rx="6" ry="2.2" fill="#ead2cc"/>
<ellipse cx="-14" cy="30" rx="6" ry="5" fill="#2d5a8a"/>
<ellipse cx="14" cy="30" rx="6" ry="5" fill="#2d5a8a"/></g></g></svg><div class="t" style="left:774.0px;top:1213.1px;font-size:27.62px;line-height:27.62px;font-weight:400;color:#151515;letter-spacing:-0.122px;">Shaun Glass</div><div class="t" style="left:1095.0px;top:1213.1px;font-size:27.62px;line-height:27.62px;font-weight:400;color:#151515;letter-spacing:-0.200px;">DK/Marketing</div><div class="t" style="left:1496.0px;top:1213.1px;font-size:27.62px;line-height:27.62px;font-weight:400;color:#151515;letter-spacing:-0.200px;">Thea Wheeler</div><div class="t" style="left:1895.0px;top:1213.1px;font-size:27.62px;line-height:27.62px;font-weight:400;color:#151515;letter-spacing:-0.200px;">11 Mar 2021</div><div class="t" style="left:2065.0px;width:800px;text-align:center;top:1210.8px;font-size:29.94px;line-height:29.94px;font-weight:700;color:#fff;transform:scaleX(0.9040);transform-origin:50% 0;text-shadow:0 0 2px rgba(0,0,0,0.18);">2 of 4</div><div class="t" style="left:2465.0px;width:800px;text-align:center;top:1210.8px;font-size:29.94px;line-height:29.94px;font-weight:700;color:#fff;transform:scaleX(0.9040);transform-origin:50% 0;text-shadow:0 0 2px rgba(0,0,0,0.18);">2 of 4</div><div class="t" style="left:2865.0px;width:800px;text-align:center;top:1210.8px;font-size:29.94px;line-height:29.94px;font-weight:700;color:#fff;transform:scaleX(0.9040);transform-origin:50% 0;text-shadow:0 0 2px rgba(0,0,0,0.18);">2 of 4</div><div class="t" style="left:3265.0px;width:800px;text-align:center;top:1210.8px;font-size:29.94px;line-height:29.94px;font-weight:700;color:#fff;transform:scaleX(0.9040);transform-origin:50% 0;text-shadow:0 0 2px rgba(0,0,0,0.18);">4 of 4</div><div class="t" style="left:3666.0px;width:800px;text-align:center;top:1210.8px;font-size:29.94px;line-height:29.94px;font-weight:700;color:#fff;transform:scaleX(0.9040);transform-origin:50% 0;text-shadow:0 0 2px rgba(0,0,0,0.18);">3 of 4</div><div class="b" style="left:76px;top:1314px;width:32px;height:32px;background:#fff;border:2px solid #dcdcdc;border-radius:5px;box-sizing:border-box;"></div><svg class="b" style="left:142px;top:1300px" width="60" height="60" viewBox="-30 -30 60 60">
<defs><clipPath id="cjuno1721330"><circle r="30"/></clipPath><filter id="fjuno1721330" x="-20%" y="-20%" width="140%" height="140%"><feGaussianBlur stdDeviation="1.3"/></filter></defs>
<g clip-path="url(#cjuno1721330)"><g filter="url(#fjuno1721330)"><rect x="-30" y="-30" width="60" height="60" fill="#2c403b"/>
<rect x="10" y="-30" width="20" height="60" fill="#1f2c29"/>
<ellipse cx="2" cy="0" rx="21" ry="27" fill="#2a1c16"/>
<ellipse cx="-4" cy="3" rx="11.5" ry="17" fill="#d9a988"/>
<ellipse cx="-5" cy="-3" rx="7" ry="8" fill="#e8c0a4"/>
<ellipse cx="-6" cy="13" rx="5" ry="2.4" fill="#d48e7e"/>
<ellipse cx="-6" cy="27" rx="14" ry="6" fill="#8a7a6a"/>
<ellipse cx="12" cy="3" rx="2.5" ry="3" fill="#a06848"/></g></g></svg><div class="t" style="left:222.5px;top:1315.1px;font-size:27.62px;line-height:27.62px;font-weight:400;color:#151515;letter-spacing:-0.020px;">Juno Griffin</div><div class="t" style="left:379.2px;top:1315.1px;font-size:27.62px;line-height:27.62px;font-weight:400;color:#9b9b9b;transform:scaleX(0.9224);transform-origin:0 0;">(12-03-2021)</div><svg class="b" style="left:696px;top:1300px" width="60" height="60" viewBox="-30 -30 60 60">
<defs><clipPath id="cjuno7261330"><circle r="30"/></clipPath><filter id="fjuno7261330" x="-20%" y="-20%" width="140%" height="140%"><feGaussianBlur stdDeviation="1.3"/></filter></defs>
<g clip-path="url(#cjuno7261330)"><g filter="url(#fjuno7261330)"><rect x="-30" y="-30" width="60" height="60" fill="#2c403b"/>
<rect x="10" y="-30" width="20" height="60" fill="#1f2c29"/>
<ellipse cx="2" cy="0" rx="21" ry="27" fill="#2a1c16"/>
<ellipse cx="-4" cy="3" rx="11.5" ry="17" fill="#d9a988"/>
<ellipse cx="-5" cy="-3" rx="7" ry="8" fill="#e8c0a4"/>
<ellipse cx="-6" cy="13" rx="5" ry="2.4" fill="#d48e7e"/>
<ellipse cx="-6" cy="27" rx="14" ry="6" fill="#8a7a6a"/>
<ellipse cx="12" cy="3" rx="2.5" ry="3" fill="#a06848"/></g></g></svg><div class="t" style="left:774.0px;top:1315.1px;font-size:27.62px;line-height:27.62px;font-weight:400;color:#151515;letter-spacing:-0.122px;">Juno Griffin</div><div class="t" style="left:1095.0px;top:1315.1px;font-size:27.62px;line-height:27.62px;font-weight:400;color:#151515;letter-spacing:-0.200px;">DK/Marketing</div><div class="t" style="left:1496.0px;top:1315.1px;font-size:27.62px;line-height:27.62px;font-weight:400;color:#151515;letter-spacing:-0.200px;">Thea Wheeler</div><div class="t" style="left:1895.0px;top:1315.1px;font-size:27.62px;line-height:27.62px;font-weight:400;color:#151515;letter-spacing:-0.200px;">8 Mar 2021</div><div class="t" style="left:2065.0px;width:800px;text-align:center;top:1312.8px;font-size:29.94px;line-height:29.94px;font-weight:700;color:#fff;transform:scaleX(0.9040);transform-origin:50% 0;text-shadow:0 0 2px rgba(0,0,0,0.18);">2 of 4</div><div class="t" style="left:2465.0px;width:800px;text-align:center;top:1312.8px;font-size:29.94px;line-height:29.94px;font-weight:700;color:#fff;transform:scaleX(0.9040);transform-origin:50% 0;text-shadow:0 0 2px rgba(0,0,0,0.18);">2 of 4</div><div class="t" style="left:2865.0px;width:800px;text-align:center;top:1312.8px;font-size:29.94px;line-height:29.94px;font-weight:700;color:#fff;transform:scaleX(0.9040);transform-origin:50% 0;text-shadow:0 0 2px rgba(0,0,0,0.18);">2 of 4</div><div class="t" style="left:3265.0px;width:800px;text-align:center;top:1312.8px;font-size:29.94px;line-height:29.94px;font-weight:700;color:#fff;transform:scaleX(0.9040);transform-origin:50% 0;text-shadow:0 0 2px rgba(0,0,0,0.18);">2 of 4</div><div class="t" style="left:3666.0px;width:800px;text-align:center;top:1312.8px;font-size:29.94px;line-height:29.94px;font-weight:700;color:#fff;transform:scaleX(0.9040);transform-origin:50% 0;text-shadow:0 0 2px rgba(0,0,0,0.18);">3 of 4</div><div class="b" style="left:76px;top:1416px;width:32px;height:32px;background:#fff;border:2px solid #dcdcdc;border-radius:5px;box-sizing:border-box;"></div><svg class="b" style="left:142px;top:1402px" width="60" height="60" viewBox="-30 -30 60 60">
<defs><clipPath id="cjon1721432"><circle r="30"/></clipPath><filter id="fjon1721432" x="-20%" y="-20%" width="140%" height="140%"><feGaussianBlur stdDeviation="1.3"/></filter></defs>
<g clip-path="url(#cjon1721432)"><g filter="url(#fjon1721432)"><rect x="-30" y="-30" width="60" height="60" fill="#433f30"/>
<ellipse cx="-24" cy="-4" rx="6" ry="9" fill="#6e6a46"/>
<ellipse cx="24" cy="-6" rx="5" ry="8" fill="#6e6a46"/>
<ellipse cx="0" cy="-29" rx="16" ry="4" fill="#9a8c58"/>
<ellipse cx="0.5" cy="-14" rx="20" ry="11" fill="#2e241c"/>
<ellipse cx="1.2" cy="5" rx="15" ry="22" fill="#c99a82"/>
<ellipse cx="1.2" cy="-1" rx="10" ry="8" fill="#dcb4a0"/>
<ellipse cx="1.2" cy="13.5" rx="9" ry="2" fill="#6a4030"/>
<ellipse cx="1.2" cy="17" rx="4" ry="3" fill="#d89a98"/>
<ellipse cx="17" cy="3" rx="3" ry="5" fill="#d0a890"/></g></g></svg><div class="t" style="left:222.5px;top:1417.1px;font-size:27.62px;line-height:27.62px;font-weight:400;color:#151515;letter-spacing:-0.012px;">Jonathan Wood</div><div class="t" style="left:431.5px;top:1417.1px;font-size:27.62px;line-height:27.62px;font-weight:400;color:#9b9b9b;transform:scaleX(0.9224);transform-origin:0 0;">(12-03-2021)</div><svg class="b" style="left:696px;top:1402px" width="60" height="60" viewBox="-30 -30 60 60">
<defs><clipPath id="cjon7261432"><circle r="30"/></clipPath><filter id="fjon7261432" x="-20%" y="-20%" width="140%" height="140%"><feGaussianBlur stdDeviation="1.3"/></filter></defs>
<g clip-path="url(#cjon7261432)"><g filter="url(#fjon7261432)"><rect x="-30" y="-30" width="60" height="60" fill="#433f30"/>
<ellipse cx="-24" cy="-4" rx="6" ry="9" fill="#6e6a46"/>
<ellipse cx="24" cy="-6" rx="5" ry="8" fill="#6e6a46"/>
<ellipse cx="0" cy="-29" rx="16" ry="4" fill="#9a8c58"/>
<ellipse cx="0.5" cy="-14" rx="20" ry="11" fill="#2e241c"/>
<ellipse cx="1.2" cy="5" rx="15" ry="22" fill="#c99a82"/>
<ellipse cx="1.2" cy="-1" rx="10" ry="8" fill="#dcb4a0"/>
<ellipse cx="1.2" cy="13.5" rx="9" ry="2" fill="#6a4030"/>
<ellipse cx="1.2" cy="17" rx="4" ry="3" fill="#d89a98"/>
<ellipse cx="17" cy="3" rx="3" ry="5" fill="#d0a890"/></g></g></svg><div class="t" style="left:774.0px;top:1417.1px;font-size:27.62px;line-height:27.62px;font-weight:400;color:#151515;letter-spacing:-0.122px;">Jonathan Wood</div><div class="t" style="left:1095.0px;top:1417.1px;font-size:27.62px;line-height:27.62px;font-weight:400;color:#151515;letter-spacing:-0.200px;">NL/Customer relations</div><div class="t" style="left:1496.0px;top:1417.1px;font-size:27.62px;line-height:27.62px;font-weight:400;color:#151515;letter-spacing:-0.200px;">Karen Andrews</div><div class="t" style="left:1895.0px;top:1417.1px;font-size:27.62px;line-height:27.62px;font-weight:400;color:#151515;letter-spacing:-0.200px;">4 Mar 2021</div><div class="t" style="left:2065.0px;width:800px;text-align:center;top:1414.8px;font-size:29.94px;line-height:29.94px;font-weight:700;color:#fff;transform:scaleX(0.9040);transform-origin:50% 0;text-shadow:0 0 2px rgba(0,0,0,0.18);">4 of 4</div><div class="t" style="left:2465.0px;width:800px;text-align:center;top:1414.8px;font-size:29.94px;line-height:29.94px;font-weight:700;color:#fff;transform:scaleX(0.9040);transform-origin:50% 0;text-shadow:0 0 2px rgba(0,0,0,0.18);">3 of 4</div><div class="t" style="left:2865.0px;width:800px;text-align:center;top:1414.8px;font-size:29.94px;line-height:29.94px;font-weight:700;color:#fff;transform:scaleX(0.9040);transform-origin:50% 0;text-shadow:0 0 2px rgba(0,0,0,0.18);">3 of 4</div><div class="t" style="left:3265.0px;width:800px;text-align:center;top:1414.8px;font-size:29.94px;line-height:29.94px;font-weight:700;color:#fff;transform:scaleX(0.9040);transform-origin:50% 0;text-shadow:0 0 2px rgba(0,0,0,0.18);">4 of 4</div><div class="t" style="left:3666.0px;width:800px;text-align:center;top:1414.8px;font-size:29.94px;line-height:29.94px;font-weight:700;color:#fff;transform:scaleX(0.9040);transform-origin:50% 0;text-shadow:0 0 2px rgba(0,0,0,0.18);">4 of 4</div><div class="b" style="left:76px;top:1518px;width:32px;height:32px;background:#fff;border:2px solid #dcdcdc;border-radius:5px;box-sizing:border-box;"></div><svg class="b" style="left:142px;top:1504px" width="60" height="60" viewBox="-30 -30 60 60">
<defs><clipPath id="clea1721534"><circle r="30"/></clipPath><filter id="flea1721534" x="-20%" y="-20%" width="140%" height="140%"><feGaussianBlur stdDeviation="1.3"/></filter></defs>
<g clip-path="url(#clea1721534)"><g filter="url(#flea1721534)"><rect x="-30" y="-30" width="60" height="60" fill="#c9a68a"/>
<rect x="-30" y="-30" width="14" height="60" fill="#e0c4a8"/>
<ellipse cx="-1.5" cy="0" rx="22" ry="28" fill="#3a2422"/>
<ellipse cx="3.2" cy="10.5" rx="13" ry="16.5" fill="#e6c0b0"/>
<path d="M-12,-2Q0,-8 16,-3L16,-22Q0,-28 -14,-18Z" fill="#3a2422"/>
<ellipse cx="4" cy="18" rx="5" ry="1.6" fill="#cf9c98"/></g></g></svg><div class="t" style="left:220.5px;top:1519.1px;font-size:27.62px;line-height:27.62px;font-weight:400;color:#151515;letter-spacing:-0.231px;">Leanna Findlay</div><div class="t" style="left:424.1px;top:1519.1px;font-size:27.62px;line-height:27.62px;font-weight:400;color:#9b9b9b;transform:scaleX(0.9224);transform-origin:0 0;">(12-03-2021)</div><svg class="b" style="left:696px;top:1504px" width="60" height="60" viewBox="-30 -30 60 60">
<defs><clipPath id="clea7261534"><circle r="30"/></clipPath><filter id="flea7261534" x="-20%" y="-20%" width="140%" height="140%"><feGaussianBlur stdDeviation="1.3"/></filter></defs>
<g clip-path="url(#clea7261534)"><g filter="url(#flea7261534)"><rect x="-30" y="-30" width="60" height="60" fill="#c9a68a"/>
<rect x="-30" y="-30" width="14" height="60" fill="#e0c4a8"/>
<ellipse cx="-1.5" cy="0" rx="22" ry="28" fill="#3a2422"/>
<ellipse cx="3.2" cy="10.5" rx="13" ry="16.5" fill="#e6c0b0"/>
<path d="M-12,-2Q0,-8 16,-3L16,-22Q0,-28 -14,-18Z" fill="#3a2422"/>
<ellipse cx="4" cy="18" rx="5" ry="1.6" fill="#cf9c98"/></g></g></svg><div class="t" style="left:774.0px;top:1519.1px;font-size:27.62px;line-height:27.62px;font-weight:400;color:#151515;letter-spacing:-0.122px;">Leanna Findlay</div><div class="t" style="left:1095.0px;top:1519.1px;font-size:27.62px;line-height:27.62px;font-weight:400;color:#151515;letter-spacing:-0.200px;">NL/Customer relations</div><div class="t" style="left:1496.0px;top:1519.1px;font-size:27.62px;line-height:27.62px;font-weight:400;color:#151515;letter-spacing:-0.200px;">Karen Andrews</div><div class="t" style="left:1895.0px;top:1519.1px;font-size:27.62px;line-height:27.62px;font-weight:400;color:#151515;letter-spacing:-0.200px;">2 Mar 2021</div><div class="t" style="left:2065.0px;width:800px;text-align:center;top:1516.8px;font-size:29.94px;line-height:29.94px;font-weight:700;color:#fff;transform:scaleX(0.9040);transform-origin:50% 0;text-shadow:0 0 2px rgba(0,0,0,0.18);">3 of 4</div><div class="t" style="left:2465.0px;width:800px;text-align:center;top:1516.8px;font-size:29.94px;line-height:29.94px;font-weight:700;color:#fff;transform:scaleX(0.9040);transform-origin:50% 0;text-shadow:0 0 2px rgba(0,0,0,0.18);">2 of 4</div><div class="t" style="left:2865.0px;width:800px;text-align:center;top:1516.8px;font-size:29.94px;line-height:29.94px;font-weight:700;color:#fff;transform:scaleX(0.9040);transform-origin:50% 0;text-shadow:0 0 2px rgba(0,0,0,0.18);">3 of 4</div><div class="t" style="left:3265.0px;width:800px;text-align:center;top:1516.8px;font-size:29.94px;line-height:29.94px;font-weight:700;color:#fff;transform:scaleX(0.9040);transform-origin:50% 0;text-shadow:0 0 2px rgba(0,0,0,0.18);">3 of 4</div><div class="t" style="left:3666.0px;width:800px;text-align:center;top:1516.8px;font-size:29.94px;line-height:29.94px;font-weight:700;color:#fff;transform:scaleX(0.9040);transform-origin:50% 0;text-shadow:0 0 2px rgba(0,0,0,0.18);">3 of 4</div><div class="b" style="left:76px;top:1620px;width:32px;height:32px;background:#fff;border:2px solid #dcdcdc;border-radius:5px;box-sizing:border-box;"></div><svg class="b" style="left:142px;top:1606px" width="60" height="60" viewBox="-30 -30 60 60">
<defs><clipPath id="cana1721636"><circle r="30"/></clipPath><filter id="fana1721636" x="-20%" y="-20%" width="140%" height="140%"><feGaussianBlur stdDeviation="1.3"/></filter></defs>
<g clip-path="url(#cana1721636)"><g filter="url(#fana1721636)"><defs><linearGradient id="gana1721636" x1="0" y1="0" x2="0" y2="1"><stop offset="0" stop-color="#e8e8ee"/><stop offset="0.25" stop-color="#d8a880"/><stop offset="0.5" stop-color="#b8b050"/><stop offset="0.75" stop-color="#6e8a62"/><stop offset="1" stop-color="#5a7a58"/></linearGradient></defs>
<rect x="-30" y="-30" width="60" height="60" fill="url(#gana1721636)"/>
<ellipse cx="1" cy="3" rx="19" ry="25" fill="#2a2018"/>
<ellipse cx="0" cy="4" rx="14" ry="19" fill="#d0a898"/>
<path d="M-12,-6Q-4,-16 12,-8Q6,-12 -2,-10Q-8,-8 -12,-2Z" fill="#2a2018"/>
<ellipse cx="0" cy="15" rx="6" ry="2.6" fill="#c05a50"/>
<ellipse cx="0" cy="14" rx="4" ry="1.2" fill="#f0e8e0"/>
<ellipse cx="0" cy="30" rx="16" ry="6" fill="#2a2a22"/></g></g></svg><div class="t" style="left:222.5px;top:1621.1px;font-size:27.62px;line-height:27.62px;font-weight:400;color:#151515;letter-spacing:-0.126px;">Anabia Hamer</div><div class="t" style="left:415.0px;top:1621.1px;font-size:27.62px;line-height:27.62px;font-weight:400;color:#9b9b9b;transform:scaleX(0.9224);transform-origin:0 0;">(12-03-2021)</div><svg class="b" style="left:696px;top:1606px" width="60" height="60" viewBox="-30 -30 60 60">
<defs><clipPath id="cana7261636"><circle r="30"/></clipPath><filter id="fana7261636" x="-20%" y="-20%" width="140%" height="140%"><feGaussianBlur stdDeviation="1.3"/></filter></defs>
<g clip-path="url(#cana7261636)"><g filter="url(#fana7261636)"><defs><linearGradient id="gana7261636" x1="0" y1="0" x2="0" y2="1"><stop offset="0" stop-color="#e8e8ee"/><stop offset="0.25" stop-color="#d8a880"/><stop offset="0.5" stop-color="#b8b050"/><stop offset="0.75" stop-color="#6e8a62"/><stop offset="1" stop-color="#5a7a58"/></linearGradient></defs>
<rect x="-30" y="-30" width="60" height="60" fill="url(#gana7261636)"/>
<ellipse cx="1" cy="3" rx="19" ry="25" fill="#2a2018"/>
<ellipse cx="0" cy="4" rx="14" ry="19" fill="#d0a898"/>
<path d="M-12,-6Q-4,-16 12,-8Q6,-12 -2,-10Q-8,-8 -12,-2Z" fill="#2a2018"/>
<ellipse cx="0" cy="15" rx="6" ry="2.6" fill="#c05a50"/>
<ellipse cx="0" cy="14" rx="4" ry="1.2" fill="#f0e8e0"/>
<ellipse cx="0" cy="30" rx="16" ry="6" fill="#2a2a22"/></g></g></svg><div class="t" style="left:774.0px;top:1621.1px;font-size:27.62px;line-height:27.62px;font-weight:400;color:#151515;letter-spacing:-0.122px;">Anabia Hamer</div><div class="t" style="left:1095.0px;top:1621.1px;font-size:27.62px;line-height:27.62px;font-weight:400;color:#151515;letter-spacing:-0.200px;">NL/Customer relations</div><div class="t" style="left:1496.0px;top:1621.1px;font-size:27.62px;line-height:27.62px;font-weight:400;color:#151515;letter-spacing:-0.200px;">Karen Andrews</div><div class="t" style="left:1895.0px;top:1621.1px;font-size:27.62px;line-height:27.62px;font-weight:400;color:#151515;letter-spacing:-0.200px;">1 Mar 2021</div><div class="t" style="left:2065.0px;width:800px;text-align:center;top:1618.8px;font-size:29.94px;line-height:29.94px;font-weight:700;color:#fff;transform:scaleX(0.9040);transform-origin:50% 0;text-shadow:0 0 2px rgba(0,0,0,0.18);">3 of 4</div><div class="t" style="left:2465.0px;width:800px;text-align:center;top:1618.8px;font-size:29.94px;line-height:29.94px;font-weight:700;color:#fff;transform:scaleX(0.9040);transform-origin:50% 0;text-shadow:0 0 2px rgba(0,0,0,0.18);">3 of 4</div><div class="t" style="left:2865.0px;width:800px;text-align:center;top:1618.8px;font-size:29.94px;line-height:29.94px;font-weight:700;color:#fff;transform:scaleX(0.9040);transform-origin:50% 0;text-shadow:0 0 2px rgba(0,0,0,0.18);">3 of 4</div><div class="t" style="left:3265.0px;width:800px;text-align:center;top:1618.8px;font-size:29.94px;line-height:29.94px;font-weight:700;color:#fff;transform:scaleX(0.9040);transform-origin:50% 0;text-shadow:0 0 2px rgba(0,0,0,0.18);">4 of 4</div><div class="t" style="left:3666.0px;width:800px;text-align:center;top:1618.8px;font-size:29.94px;line-height:29.94px;font-weight:700;color:#fff;transform:scaleX(0.9040);transform-origin:50% 0;text-shadow:0 0 2px rgba(0,0,0,0.18);">4 of 4</div>
</body></html>
